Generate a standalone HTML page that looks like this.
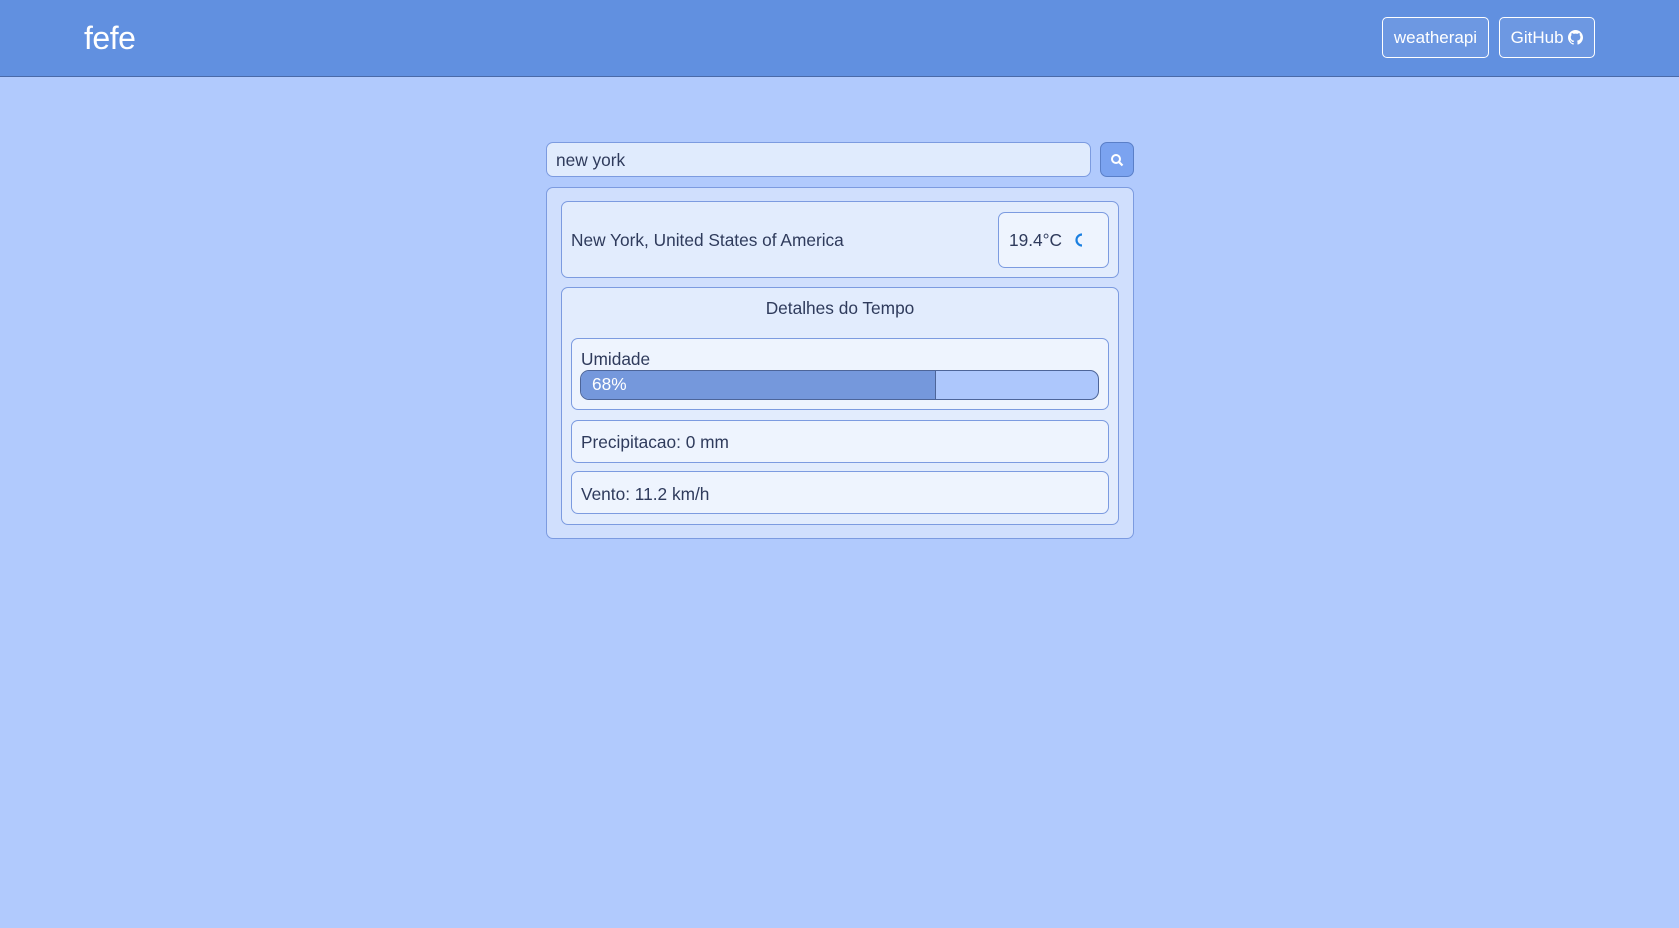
<!DOCTYPE html>
<html><head><meta charset="utf-8"><style>
*{box-sizing:border-box;margin:0;padding:0}
body{width:1679px;height:928px;background:#b1cafd;font-family:"Liberation Sans",sans-serif;color:#2f3b5c;font-size:17.3px;position:relative;overflow:hidden}
.hdr{position:absolute;left:0;top:0;width:1679px;height:77px;background:#6190e0;border-bottom:1px solid #4a6aa8}
.logo{position:absolute;left:84px;top:20px;font-size:32px;color:#fff;letter-spacing:-0.5px}
.btn{position:absolute;top:17px;height:41px;border:1px solid #fff;border-radius:5px;color:#fff;background:#6d98e2;font-size:17px;line-height:39px;text-align:center}
.b{position:absolute;border:1px solid #7c9be0;border-radius:7px}
</style></head><body>
<div class="hdr">
<div class="logo">fefe</div>
<div class="btn" style="left:1382px;width:107px">weatherapi</div>
<div class="btn" style="left:1499px;width:96px">GitHub <svg width="15" height="15" viewBox="0 0 16 16" style="vertical-align:-2px"><path fill="#fff" d="M8 0C3.6 0 0 3.6 0 8c0 3.5 2.3 6.5 5.5 7.6.4.1.5-.2.5-.4v-1.4c-2.2.5-2.7-1-2.700-1-.4-.9-.9-1.2-.9-1.2-.7-.5.1-.5.1-.5.8.1 1.2.8 1.2.8.7 1.3 1.9.9 2.4.7.1-.5.3-.9.5-1.1-1.8-.2-3.6-.9-3.6-4 0-.9.3-1.6.8-2.1-.1-.2-.4-1 .1-2.1 0 0 .7-.2 2.2.8.6-.2 1.3-.3 2-.3s1.4.1 2 .3c1.5-1 2.2-.8 2.2-.8.4 1.1.2 1.9.1 2.1.5.6.8 1.3.8 2.1 0 3.1-1.9 3.7-3.6 3.9.3.3.5.8.5 1.500v2.2c0 .2.1.5.6.4C13.7 14.5 16 11.5 16 8c0-4.4-3.6-8-8-8z"/></svg></div>
</div>
<div class="b" style="left:546px;top:142px;width:545px;height:35px;background:#e0ebfd;padding:8px 9px;line-height:19px">new york</div>
<div class="b" style="left:1100px;top:142px;width:34px;height:35px;background:#7ba3f0;border-color:#5a7fc8">
<svg width="14" height="14" viewBox="0 0 14 14" style="position:absolute;left:9px;top:10px"><circle cx="6" cy="6" r="4" stroke="#fff" stroke-width="2" fill="none"/><path d="M9 9l3.5 3.5" stroke="#fff" stroke-width="2.2"/></svg></div>
<div class="b" style="left:546px;top:187px;width:588px;height:352px;background:#d0dffd"></div>
<div class="b" style="left:561px;top:201px;width:558px;height:77px;background:#e2ecfd"><span style="position:absolute;left:9px;top:28px">New York, United States of America</span></div>
<div class="b" style="left:998px;top:212px;width:111px;height:56px;background:#eef4fe"><span style="position:absolute;left:10px;top:17px">19.4°C</span><svg width="10" height="14" viewBox="0 0 10 14" style="position:absolute;left:76px;top:20px"><path d="M7 1.5A5.5 5.5 0 1 0 7 12.5 4 4 0 0 1 7 1.5z" fill="none" stroke="#1a7fe0" stroke-width="2.2"/></svg></div>
<div class="b" style="left:561px;top:287px;width:558px;height:238px;background:#e2ecfd"><div style="text-align:center;margin-top:10px">Detalhes do Tempo</div></div>
<div class="b" style="left:571px;top:338px;width:538px;height:72px;background:#eef4fe"><span style="position:absolute;left:9px;top:10px">Umidade</span></div>
<div style="position:absolute;left:580px;top:370px;width:519px;height:30px;border:1px solid #4d6599;border-radius:9px;background:#adc7fc;overflow:hidden"><div style="width:355px;height:100%;background:#7598dc;border-right:1px solid #4d6599;color:#fff;padding-left:11px;line-height:27px">68%</div></div>
<div class="b" style="left:571px;top:420px;width:538px;height:43px;background:#eef4fe"><span style="position:absolute;left:9px;top:11px">Precipitacao: 0 mm</span></div>
<div class="b" style="left:571px;top:471px;width:538px;height:43px;background:#eef4fe"><span style="position:absolute;left:9px;top:12px">Vento: 11.2 km/h</span></div>
</body></html>
